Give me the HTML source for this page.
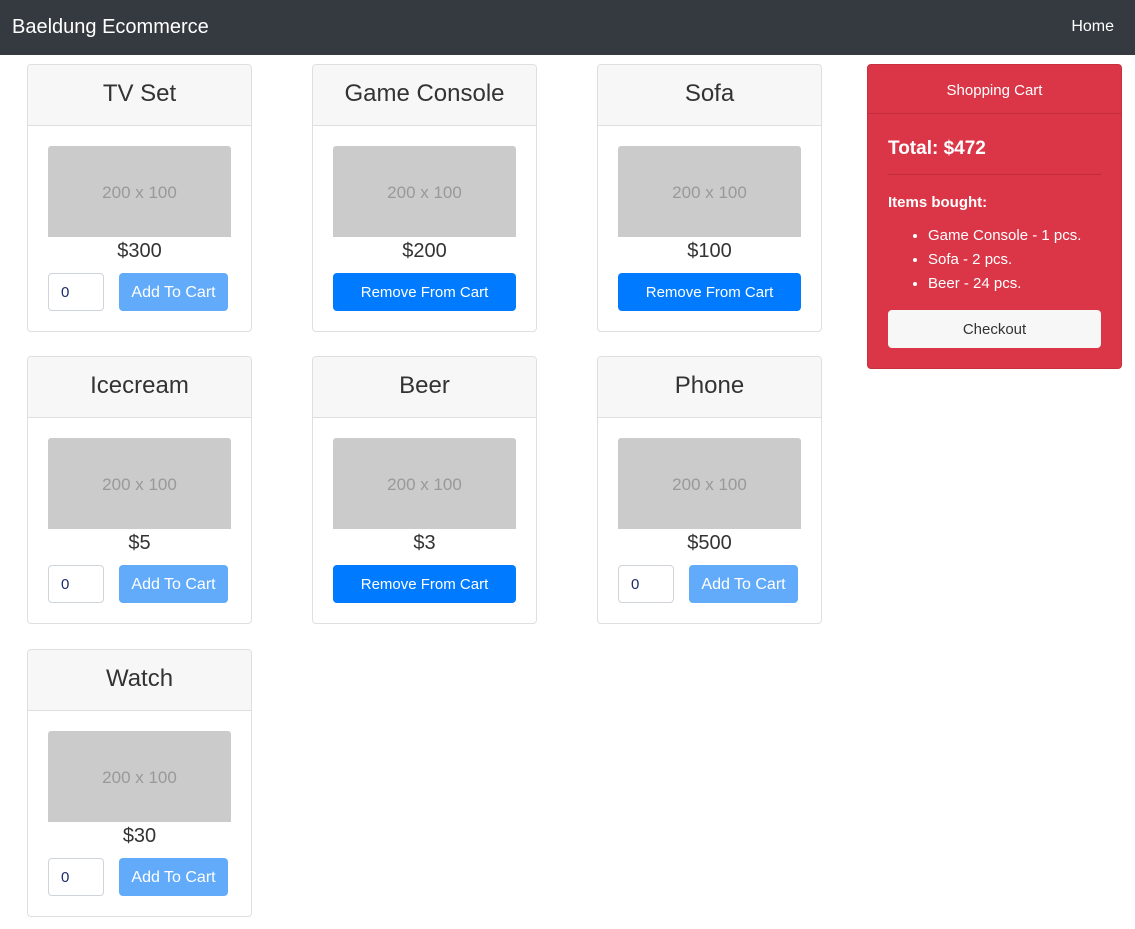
<!DOCTYPE html>
<html><head><meta charset="utf-8"><style>
*{box-sizing:border-box;margin:0;padding:0}
body{width:1135px;height:929px;background:#fff;font-family:"Liberation Sans",sans-serif;color:#212529;position:relative;overflow:hidden}
.nav{position:absolute;left:0;top:0;width:1135px;height:55px;background:#343a40;color:#fff}
.brand{position:absolute;left:12px;top:16px;font-size:20px}
.home{position:absolute;right:21px;top:18px;font-size:16px}
.card{position:absolute;width:225px;height:268px;border:1px solid #dfdfdf;border-radius:4px;overflow:hidden}
.ch{height:61px;background:#f7f7f7;border-bottom:1px solid #dfdfdf;text-align:center;font-size:24px;line-height:58px;color:#333}
.img{position:absolute;left:20px;top:81px;width:183px;height:91px;background:#cbcbcb;color:#999;font-size:17px;text-align:center;line-height:93px;border-radius:3px 3px 0 0}
.price{position:absolute;left:0;width:223px;top:175px;text-align:center;font-size:20px;color:#333}
.inp{position:absolute;left:20px;top:208px;width:56px;height:38px;border:1px solid #ced4da;border-radius:4px;font-size:15px;line-height:38px;padding-left:12px;color:#1a2a6a}
.add{position:absolute;left:91px;top:208px;width:109px;height:38px;background:#61abfa;color:#fff;border-radius:4px;font-size:16px;text-align:center;line-height:40px}
.rem{position:absolute;left:20px;top:208px;width:183px;height:38px;background:#007bff;color:#fff;border-radius:4px;font-size:15px;text-align:center;line-height:40px}
.cart{position:absolute;left:867px;top:64px;width:255px;height:305px;background:#da3647;border:1px solid #c8303f;border-radius:4px;color:#fff}
.cart .h{height:49px;border-bottom:1px solid #c22d3c;text-align:center;line-height:51px;font-size:15px}
</style></head><body>
<div class="nav"><div class="brand">Baeldung Ecommerce</div><div class="home">Home</div></div>

<div class="card" style="left:27px;top:64px"><div class="ch">TV Set</div><div class="img">200 x 100</div><div class="price">$300</div><div class="inp">0</div><div class="add">Add To Cart</div></div>
<div class="card" style="left:312px;top:64px"><div class="ch">Game Console</div><div class="img">200 x 100</div><div class="price">$200</div><div class="rem">Remove From Cart</div></div>
<div class="card" style="left:597px;top:64px"><div class="ch">Sofa</div><div class="img">200 x 100</div><div class="price">$100</div><div class="rem">Remove From Cart</div></div>

<div class="card" style="left:27px;top:356px"><div class="ch">Icecream</div><div class="img">200 x 100</div><div class="price">$5</div><div class="inp">0</div><div class="add">Add To Cart</div></div>
<div class="card" style="left:312px;top:356px"><div class="ch">Beer</div><div class="img">200 x 100</div><div class="price">$3</div><div class="rem">Remove From Cart</div></div>
<div class="card" style="left:597px;top:356px"><div class="ch">Phone</div><div class="img">200 x 100</div><div class="price">$500</div><div class="inp">0</div><div class="add">Add To Cart</div></div>

<div class="card" style="left:27px;top:649px"><div class="ch">Watch</div><div class="img">200 x 100</div><div class="price">$30</div><div class="inp">0</div><div class="add">Add To Cart</div></div>

<div class="cart">
<div class="h">Shopping Cart</div>
<div style="position:absolute;left:20px;top:73px;font-size:19px;font-weight:bold">Total: $472</div>
<div style="position:absolute;left:20px;top:109px;width:213px;border-top:1px solid #c02c3b"></div>
<div style="position:absolute;left:20px;top:129px;font-size:15px;font-weight:bold">Items bought:</div>
<ul style="position:absolute;left:60px;top:159px;font-size:15px;line-height:24px">
<li>Game Console - 1 pcs.</li><li>Sofa - 2 pcs.</li><li>Beer - 24 pcs.</li></ul>
<div style="position:absolute;left:20px;top:245px;width:213px;height:38px;background:#f7f7f7;border-radius:4px;color:#333;text-align:center;line-height:40px;font-size:15px">Checkout</div>
</div>
</body></html>
